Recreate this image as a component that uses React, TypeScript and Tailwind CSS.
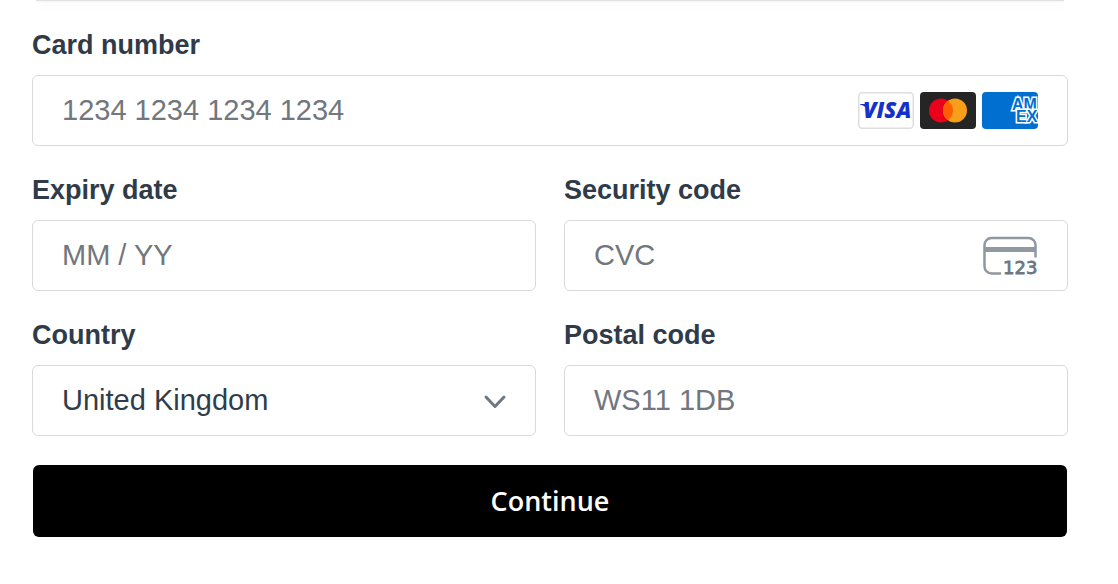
import type { InputHTMLAttributes, ReactNode } from "react";

const control =
  "block h-[71px] w-full appearance-none rounded-md border border-[#d9d9d9] bg-white pl-[29px] pr-7 text-[29px] leading-9 text-[#2f3d4a] outline-none placeholder:text-[#72777d] placeholder:opacity-100";

interface FieldProps {
  id: string;
  label: string;
  children?: ReactNode;
}

function Field({ id, label, children }: FieldProps) {
  return (
    <div className="min-w-0">
      <label htmlFor={id} className="mb-3.5 block text-[27px] font-bold leading-8 text-[#2f3b49]">
        {label}
      </label>
      <div className="relative">{children}</div>
    </div>
  );
}

function TextField({ id, label, children, ...props }: FieldProps & InputHTMLAttributes<HTMLInputElement>) {
  return (
    <Field id={id} label={label}>
      <input id={id} type="text" className={control} {...props} />
      {children}
    </Field>
  );
}

function CardBrands() {
  return (
    <div className="pointer-events-none absolute inset-y-0 right-[30px] flex items-center gap-1.5">
      <svg width="56" height="37" viewBox="0 0 56 37" role="img" aria-label="Visa">
        <rect x="0.75" y="0.75" width="54.5" height="35.5" rx="3.5" fill="#fff" stroke="#dedede" strokeWidth="1.5" />
        <path d="M2 12h6q2 0 2.500 2l1.500 7q-2.500-6.500-10-8.400z" fill="#1434cb" />
        <text x="5" y="26" fontFamily="Open Sans" fontSize="22" fontWeight="800" fontStyle="italic" fill="#1431cb">
          VISA
        </text>
      </svg>
      <svg width="56" height="37" viewBox="0 0 56 37" role="img" aria-label="Mastercard">
        <rect width="56" height="37" rx="4" fill="#252525" />
        <circle cx="21" cy="18.500" r="12" fill="#eb001b" />
        <circle cx="35" cy="18.500" r="12" fill="#f79e1b" />
        <path d="M28 8.750a12 12 0 0 1 0 19.500a12 12 0 0 1 0-19.500" fill="#ff5f00" />
      </svg>
      <svg width="56" height="37" viewBox="0 0 56 37" role="img" aria-label="American Express" className="rounded">
        <rect width="56" height="37" fill="#016fd0" />
        <text
          fontFamily="Liberation Sans"
          fontSize="16"
          fontWeight="700"
          fill="#016fd0"
          stroke="#fff"
          strokeWidth="3"
          paintOrder="stroke"
        >
          <tspan x="30" y="18">AM</tspan>
          <tspan x="34" y="30">EX</tspan>
        </text>
      </svg>
    </div>
  );
}

export default function App() {
  return (
    <main className="pl-8 pr-[50px] font-['Liberation_Sans',Arial,sans-serif]">
      <div className="mx-1 h-px bg-[#e2e2e2] shadow-[0_1px_2px_rgba(0,0,0,0.06),0_3px_12px_rgba(0,0,0,0.12)]" />
      <form className="pt-7">
        <div className="grid grid-cols-2 gap-7">
          <div className="col-span-2">
            <TextField id="number" label="Card number" placeholder="1234 1234 1234 1234" inputMode="numeric">
              <CardBrands />
            </TextField>
          </div>
          <TextField id="expiry" label="Expiry date" placeholder="MM / YY" />
          <TextField id="cvc" label="Security code" placeholder="CVC">
            <svg
              className="pointer-events-none absolute right-[30px] top-4 overflow-visible"
              width="56"
              height="40"
              viewBox="0 0 56 40"
              fill="none"
              aria-hidden="true"
            >
              <path
                d="M19 37.500H9.500a7 7 0 0 1-7-7V9a7 7 0 0 1 7-7h37a7 7 0 0 1 7 7v12.500"
                stroke="#9198a1"
                strokeWidth="2.500"
              />
              <path d="M2 13.500h52" stroke="#9198a1" strokeWidth="5" />
              <text
                x="21"
                y="38"
                fontFamily="DejaVu Sans"
                fontSize="18"
                fill="#6d7783"
                stroke="#6d7783"
                strokeWidth="0.8"
              >
                123
              </text>
            </svg>
          </TextField>
          <Field id="country" label="Country">
            <select id="country" className={`${control} pb-0.5`}>
              <option>United Kingdom</option>
            </select>
            <svg
              className="pointer-events-none absolute right-[29px] top-7"
              width="24"
              height="18"
              viewBox="0 0 24 18"
              fill="none"
              stroke="#6d7885"
              strokeWidth="3"
              strokeLinecap="round"
              strokeLinejoin="round"
              aria-hidden="true"
            >
              <path d="M3 4l9 9.500 9-9.500" />
            </svg>
          </Field>
          <TextField id="postal" label="Postal code" placeholder="WS11 1DB" />
        </div>
        <div className="px-px pt-[29px]">
          <button
            type="button"
            className="block h-[72px] w-full rounded-md bg-black font-['Open_Sans',sans-serif] text-[27px] font-semibold text-white"
          >
            Continue
          </button>
        </div>
      </form>
    </main>
  );
}
